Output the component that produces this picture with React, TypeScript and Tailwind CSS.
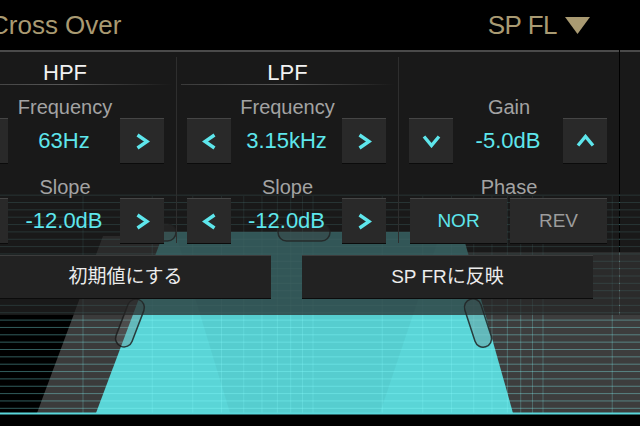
import React from "react";

const CYAN = "#5ee6ec";

function Chevron({ dir }: { dir: "left" | "right" | "up" | "down" }) {
  if (dir === "left" || dir === "right") {
    const pts = dir === "right" ? "2.5,2 12,8.5 2.5,15" : "12.5,2 3,8.5 12.5,15";
    return (
      <svg width="15" height="17" viewBox="0 0 15 17">
        <polyline points={pts} fill="none" stroke={CYAN} strokeWidth="3.4" strokeLinecap="butt" strokeLinejoin="miter" />
      </svg>
    );
  }
  const pts = dir === "down" ? "2,2.5 9.5,11.5 17,2.5" : "2,11.5 9.5,2.5 17,11.5";
  return (
    <svg width="19" height="14" viewBox="0 0 19 14">
      <polyline points={pts} fill="none" stroke={CYAN} strokeWidth="3.4" strokeLinecap="butt" strokeLinejoin="miter" />
    </svg>
  );
}

function SmallBtn({ dir }: { dir: "left" | "right" | "up" | "down" }) {
  return (
    <div className="w-[44px] h-[45px] shrink-0 bg-[#292929] border-t border-t-[#454545] shadow-[0_1px_0_#0b0b0b] flex items-center justify-center">
      <Chevron dir={dir} />
    </div>
  );
}

function Label({ children, mt }: { children: React.ReactNode; mt: string }) {
  return (
    <div className={`${mt} h-[20px] leading-[20px] text-[20px] text-[#a3a3a3] text-center`}>{children}</div>
  );
}

function ValueRow({ left, right, value }: { left: "left" | "down"; right: "right" | "up"; value: string }) {
  return (
    <div className="mt-[1px] h-[45px] flex items-center pl-[10px] pr-[12px]">
      <SmallBtn dir={left} />
      <div className="flex-1 text-center text-[22px] leading-[24px] text-[#5ee6ec]">{value}</div>
      <SmallBtn dir={right} />
    </div>
  );
}

function Title({ children }: { children?: React.ReactNode }) {
  return (
    <>
      <div className="h-[22px] leading-[22px] text-[22px] text-[#f2f2f2] text-center">{children}</div>
      <div className="mx-[4px] h-px bg-linear-to-r from-[#3a3a3a] via-[#585858] to-transparent" />
    </>
  );
}

function Graph() {
  const hLines: number[] = [];
  for (let k = 0; k < 30; k++) hLines.push(408.3 - 7.35 * k);
  const vLines: number[] = [];
  const starts = [83, 313, 543];
  for (const s of starts) {
    for (let n = 1; n <= 9; n++) {
      const x = s + 230 * Math.log10(n);
      if (x > 0 && x < 640) vLines.push(x);
    }
  }
  return (
    <svg width="640" height="376" viewBox="0 50 640 376" className="block">
      <rect x="0" y="50" width="640" height="376" fill="#000" />
      <polygon points="37,413 103,236 180,236 110,413" fill="#3b3b3b" />
      <polygon points="455,252 640,252 640,413 513,413" fill="#3d3d3d" />
      <polygon points="96,413 164,232 462,232 513,413" fill="#5ad5d7" />
      <polygon points="175,232 441,232 380,413 230,413" fill="#000" opacity="0.035" />
      {hLines.map((y, i) => (
        <line key={"h" + i} x1="0" x2="640" y1={y} y2={y} stroke="#88ffff" strokeOpacity="0.36" strokeWidth="1" />
      ))}
      {vLines.map((x, i) => (
        <line key={"v" + i} x1={x} x2={x} y1="196" y2="413" stroke="#88ffff" strokeOpacity="0.24" strokeWidth="1" />
      ))}
      <rect x="121.5" y="298" width="17" height="50" rx="8.5" fill="rgba(120,120,120,0.3)" stroke="rgba(25,25,25,0.8)" strokeWidth="1.5" transform="rotate(21 130 323)" />
      <rect x="469.5" y="298" width="17" height="50" rx="8.5" fill="rgba(120,120,120,0.3)" stroke="rgba(25,25,25,0.8)" strokeWidth="1.5" transform="rotate(-18 478 323)" />
      <rect x="124" y="224" width="52" height="17" rx="8.5" fill="rgba(120,120,120,0.3)" stroke="rgba(25,25,25,0.8)" strokeWidth="1.5" />
      <rect x="278" y="224" width="52" height="17" rx="8.5" fill="rgba(120,120,120,0.3)" stroke="rgba(25,25,25,0.8)" strokeWidth="1.5" />
      <rect x="0" y="412.5" width="640" height="2" fill="#5ad8dc" />
    </svg>
  );
}

export default function App() {
  return (
    <div className="w-[640px] h-[426px] overflow-hidden bg-black font-['Liberation_Sans','Noto_Sans_CJK_JP',sans-serif]">
      <div className="h-[50px] flex items-start">
        <div className="ml-[-10px] mt-[11px] text-[26px] leading-[28px] text-[#a99a72] whitespace-nowrap">Cross Over</div>
        <div className="ml-auto mr-[50px] mt-[11px] h-[28px] flex items-center gap-[8px]">
          <span className="text-[26px] leading-[28px] text-[#a99a72] tracking-[-0.5px]">SP FL</span>
          <svg width="25" height="17" viewBox="0 0 25 17">
            <polygon points="0,0 25,0 12.5,17" fill="#a99a72" />
          </svg>
        </div>
      </div>
      <div className="grid">
        <div className="col-start-1 row-start-1">
          <Graph />
        </div>
        <div className="col-start-1 row-start-1 flex h-[265px]">
          <div className="ml-[-46px] w-[665px] shrink-0 h-full border-t-2 border-t-[#4a4a4a] bg-[#242424]/70 flex flex-col">
            <div className="flex pt-[10px] pb-[7px]">
              <div className="w-[222px] flex flex-col">
                <Title>HPF</Title>
                <Label mt="mt-[12px]">Frequency</Label>
                <ValueRow left="left" right="right" value="63Hz" />
                <Label mt="mt-[14px]">Slope</Label>
                <ValueRow left="left" right="right" value="-12.0dB" />
              </div>
              <div className="w-px mt-[-5px] bg-[#2e2e2e]" />
              <div className="w-[221px] flex flex-col">
                <Title>LPF</Title>
                <Label mt="mt-[12px]">Frequency</Label>
                <ValueRow left="left" right="right" value="3.15kHz" />
                <Label mt="mt-[14px]">Slope</Label>
                <ValueRow left="left" right="right" value="-12.0dB" />
              </div>
              <div className="w-px mt-[-5px] bg-[#2e2e2e]" />
              <div className="w-[220px] flex flex-col">
                <div className="h-[23px]" />
                <Label mt="mt-[12px]">Gain</Label>
                <ValueRow left="down" right="up" value="-5.0dB" />
                <Label mt="mt-[14px]">Phase</Label>
                <div className="mt-[1px] h-[45px] flex gap-[3px] pl-[11px] pr-[12px]">
                  <div className="flex-1 bg-[#292929] border-t border-t-[#454545] shadow-[0_1px_0_#0b0b0b] flex items-center justify-center text-[19px] text-[#5ee6ec]">NOR</div>
                  <div className="flex-1 bg-[#292929] border-t border-t-[#454545] shadow-[0_1px_0_#0b0b0b] flex items-center justify-center text-[19px] text-[#9c9c9c]">REV</div>
                </div>
              </div>
            </div>
            <div className="mt-[5px] h-[43px] flex gap-[31px] px-[26px]">
              <div className="flex-1 bg-[#222] border-t border-t-[#3c3c3c] shadow-[0_1px_0_#0b0b0b] flex items-center justify-center text-[19px] text-[#ececec]">初期値にする</div>
              <div className="flex-1 bg-[#222] border-t border-t-[#3c3c3c] shadow-[0_1px_0_#0b0b0b] flex items-center justify-center text-[19px] text-[#ececec]">SP FRに反映</div>
            </div>
          </div>
          <div className="ml-[1px] flex-1 h-full border-t-2 border-t-[#4a4a4a] bg-[#242424]/70" />
        </div>
      </div>
    </div>
  );
}
